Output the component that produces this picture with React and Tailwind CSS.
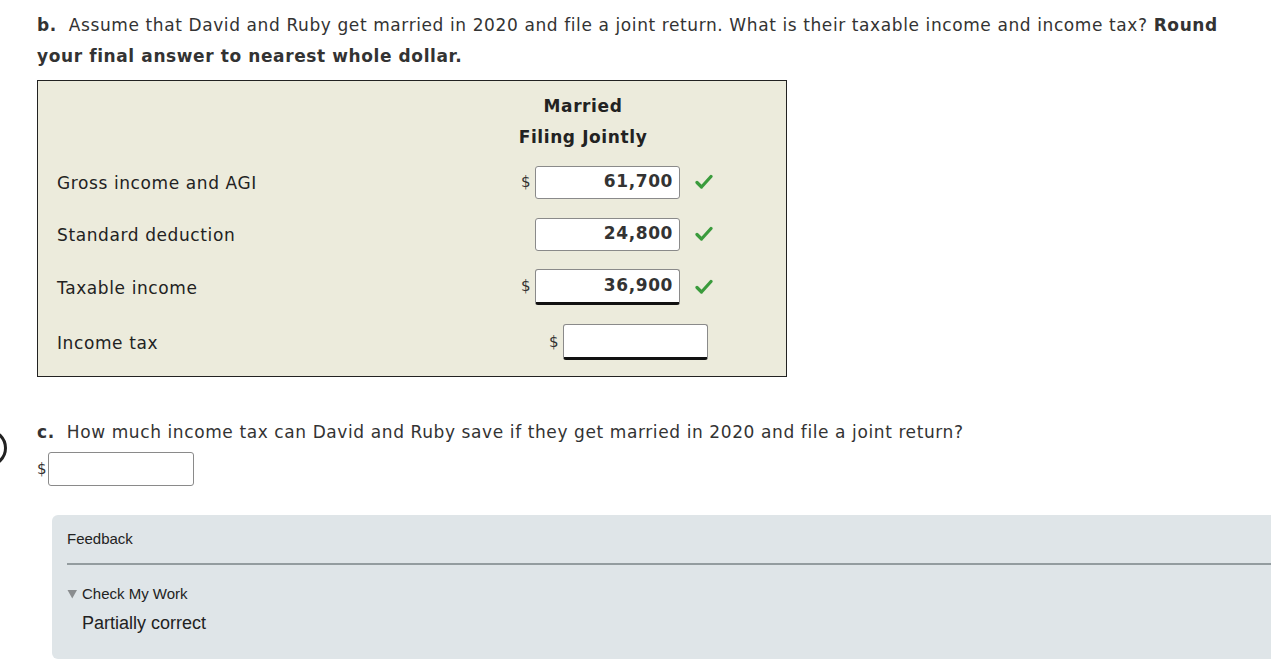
import React from 'react'

const verdana = "font-['DejaVu_Sans',Verdana,sans-serif]"
const arial = "font-['Liberation_Sans',Arial,sans-serif]"

function Check() {
  return (
    <svg width="18" height="16" viewBox="0 0 18 16" className="shrink-0">
      <path d="M2 8.5 L6.5 13 L16 2.5" fill="none" stroke="#3a9b3c" strokeWidth="3.2" strokeLinecap="round" strokeLinejoin="round" />
    </svg>
  )
}

function AmountBox({ value, total, className = '' }) {
  return (
    <div
      className={
        'w-[145px] h-[33px] bg-white border border-[#8a8a8a] rounded-[3px] flex items-center justify-end pr-[6px] text-[17px] tracking-[0.6px] font-bold text-[#333] ' +
        (total ? 'border-b-[3px] border-b-[#111] h-[36px] ' : '') +
        className
      }
    >
      {value}
    </div>
  )
}

function Row({ label, value, dollar, total, check, offset, height }) {
  return (
    <div className={'flex items-center ' + height}>
      <div className="w-[483px] pl-[19px] pt-[4px] text-[17px] tracking-[0.6px] text-[#222]">{label}</div>
      <div className={'flex items-center ' + offset}>
        <span className={'w-[14px] text-[15px] text-[#333] ' + (dollar ? '' : 'invisible')}>$</span>
        <AmountBox value={value} total={total} />
        {check && (
          <div className="ml-[15px]">
            <Check />
          </div>
        )}
      </div>
    </div>
  )
}

export default function App() {
  return (
    <div className={'relative min-h-[672px] overflow-hidden bg-white text-[#333] ' + verdana}>
      <div className="absolute left-[-31px] top-[429px] w-[38px] h-[38px] rounded-full border-[3px] border-[#222]" />

      <div className="pl-[37px] pt-[10px]">
        <p className="max-w-[1200px] text-[17px] leading-[31px] tracking-[0.6px]">
          <b>b.</b>&nbsp; Assume that David and Ruby get married in 2020 and file a joint return. What is their taxable income and income tax? <b>Round your final answer to nearest whole dollar.</b>
        </p>

        <div className="mt-[8px] w-[750px] h-[297px] border border-[#222] bg-[#ecebdc]">
          <div className="pt-[10px] ml-[445px] w-[200px] text-center text-[17px] tracking-[0.6px] font-bold leading-[31px] text-[#222]">
            <div>Married</div>
            <div>Filing Jointly</div>
          </div>
          <div className="mt-[3px]">
            <Row label="Gross income and AGI" value="61,700" dollar check height="h-[52px]" offset="" />
            <Row label="Standard deduction" value="24,800" check height="h-[52px]" offset="" />
            <Row label="Taxable income" value="36,900" dollar total check height="h-[53px]" offset="" />
            <Row label="Income tax" value="" dollar total height="h-[58px]" offset="ml-[28px]" />
          </div>
        </div>

        <p className="mt-[40px] text-[17px] leading-[31px] tracking-[0.6px]">
          <b>c.</b>&nbsp; How much income tax can David and Ruby save if they get married in 2020 and file a joint return?
        </p>
        <div className="mt-[4px] flex items-center">
          <span className="w-[11px] text-[15px] text-[#333]">$</span>
          <div className="w-[146px] h-[34px] bg-white border border-[#8a8a8a] rounded-[3px]" />
        </div>
      </div>

      <div className={'mt-[29px] ml-[52px] w-[1240px] rounded-l-[6px] bg-[#dfe5e8] pl-[15px] pt-[14px] pb-[24px] ' + arial}>
        <div className="text-[15px] leading-[20px] text-[#222]">Feedback</div>
        <div className="mt-[14px] h-[2px] bg-[#939c9f]" />
        <div className="mt-[19px] flex items-center text-[15px] leading-[20px] text-[#222]">
          <svg width="15" height="10" viewBox="0 0 15 10" className="shrink-0">
            <path d="M0.5 1 L10 1 L5.25 9.5 Z" fill="#8a8d8f" />
          </svg>
          <span>Check My Work</span>
        </div>
        <div className="mt-[7px] pl-[15px] text-[18px] leading-[24px] text-[#222]">Partially correct</div>
      </div>
    </div>
  )
}
